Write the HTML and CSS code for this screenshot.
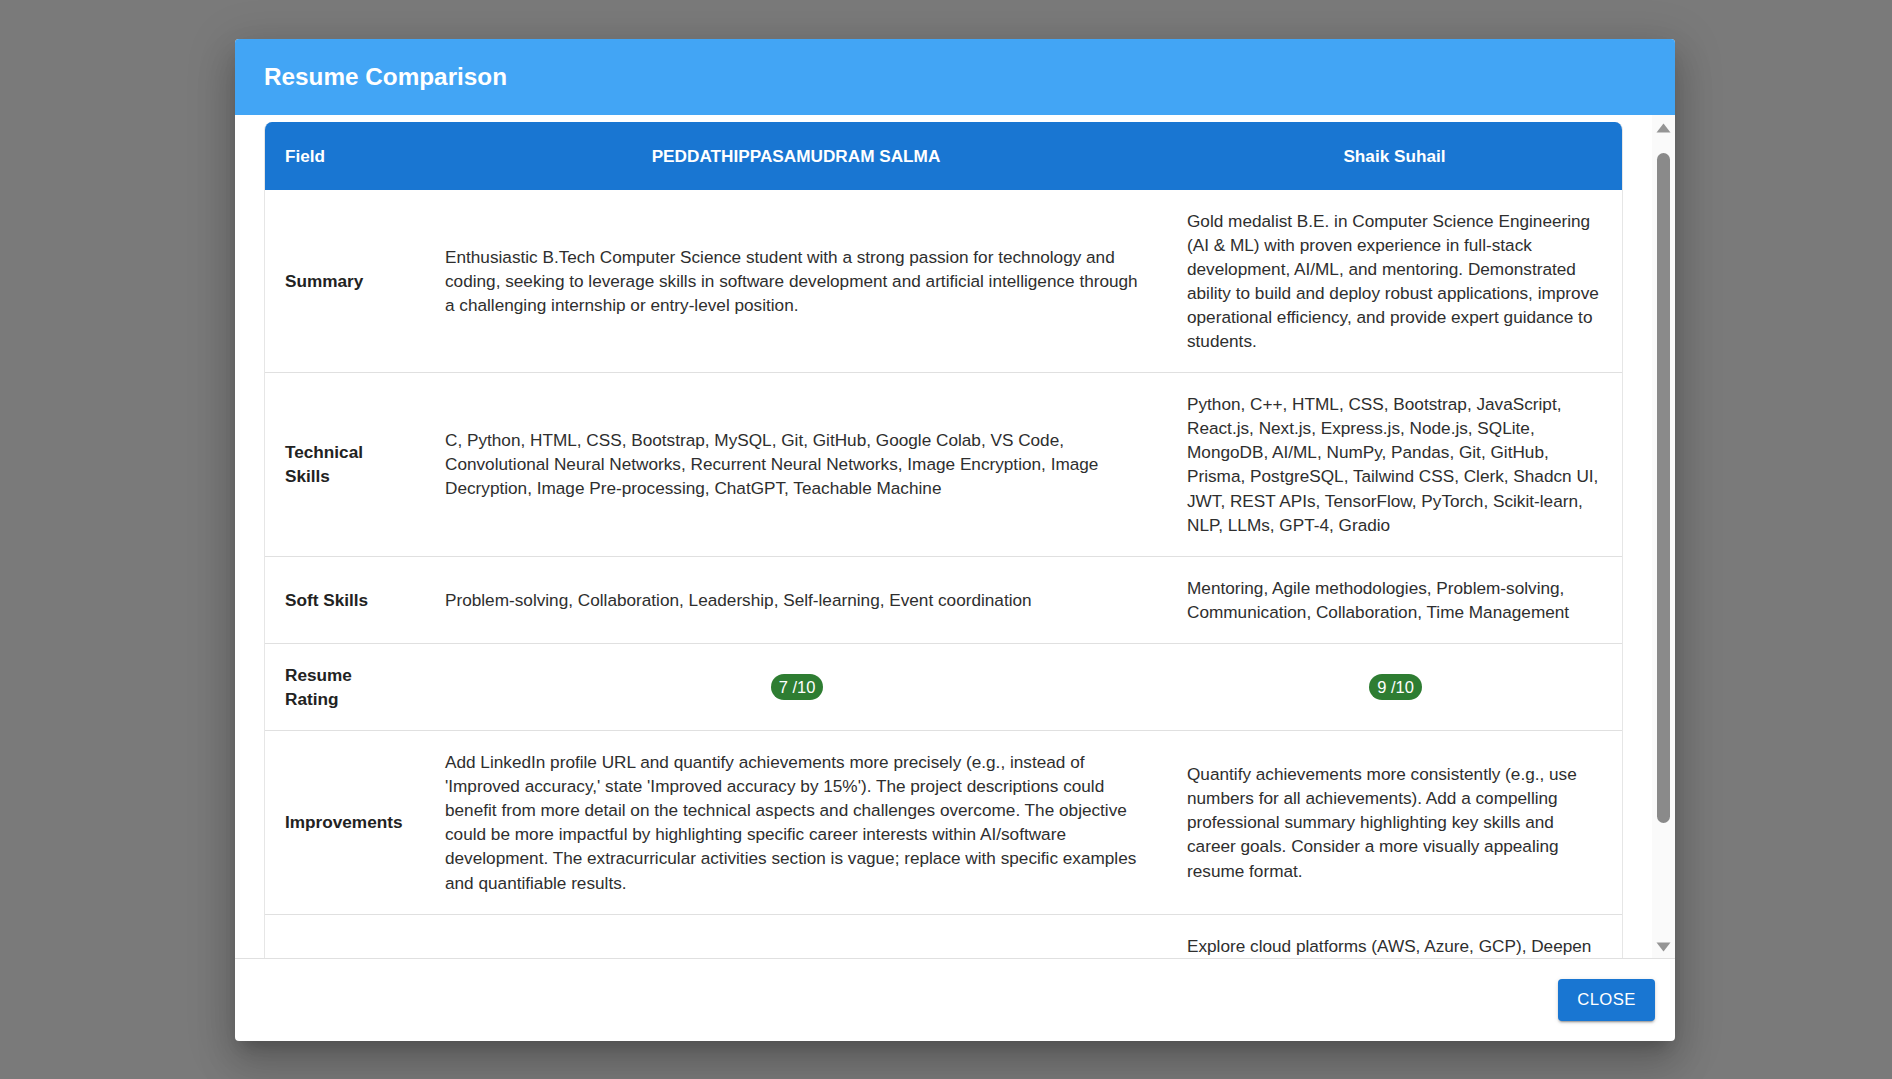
FILE: index.html
```html
<!DOCTYPE html>
<html lang="en">
<head>
<meta charset="utf-8">
<title>Resume Comparison</title>
<link rel="stylesheet" href="styles.css">
</head>
<body>
<div class="dialog">
  <div class="dialog-title">Resume Comparison</div>
  <div class="dialog-body">
    <div class="scroll-area">
      <div class="table-wrap">
        <table class="cmp">
          <colgroup>
            <col class="c-field">
            <col class="c-a">
            <col class="c-b">
          </colgroup>
          <thead>
            <tr>
              <th class="th-left">Field</th>
              <th>PEDDATHIPPASAMUDRAM SALMA</th>
              <th>Shaik Suhail</th>
            </tr>
          </thead>
          <tbody>
            <tr>
              <td class="field">Summary</td>
              <td>Enthusiastic B.Tech Computer Science student with a strong passion for technology and coding, seeking to leverage skills in software development and artificial intelligence through a challenging internship or entry-level position.</td>
              <td>Gold medalist B.E. in Computer Science Engineering (AI &amp; ML) with proven experience in full-stack development, AI/ML, and mentoring. Demonstrated ability to build and deploy robust applications, improve operational efficiency, and provide expert guidance to students.</td>
            </tr>
            <tr>
              <td class="field">Technical Skills</td>
              <td>C, Python, HTML, CSS, Bootstrap, MySQL, Git, GitHub, Google Colab, VS Code, Convolutional Neural Networks, Recurrent Neural Networks, Image Encryption, Image Decryption, Image Pre-processing, ChatGPT, Teachable Machine</td>
              <td>Python, C++, HTML, CSS, Bootstrap, JavaScript, React.js, Next.js, Express.js, Node.js, SQLite, MongoDB, AI/ML, NumPy, Pandas, Git, GitHub, Prisma, PostgreSQL, Tailwind CSS, Clerk, Shadcn UI, JWT, REST APIs, TensorFlow, PyTorch, Scikit-learn, NLP, LLMs, GPT-4, Gradio</td>
            </tr>
            <tr>
              <td class="field">Soft Skills</td>
              <td>Problem-solving, Collaboration, Leadership, Self-learning, Event coordination</td>
              <td>Mentoring, Agile methodologies, Problem-solving, Communication, Collaboration, Time Management</td>
            </tr>
            <tr>
              <td class="field">Resume Rating</td>
              <td class="center"><span class="chip">7 /10</span></td>
              <td class="center"><span class="chip">9 /10</span></td>
            </tr>
            <tr>
              <td class="field">Improvements</td>
              <td>Add LinkedIn profile URL and quantify achievements more precisely (e.g., instead of 'Improved accuracy,' state 'Improved accuracy by 15%'). The project descriptions could benefit from more detail on the technical aspects and challenges overcome. The objective could be more impactful by highlighting specific career interests within AI/software development. The extracurricular activities section is vague; replace with specific examples and quantifiable results.</td>
              <td>Quantify achievements more consistently (e.g., use numbers for all achievements). Add a compelling professional summary highlighting key skills and career goals. Consider a more visually appealing resume format.</td>
            </tr>
            <tr>
              <td class="field"></td>
              <td></td>
              <td>Explore cloud platforms (AWS, Azure, GCP), Deepen</td>
            </tr>
          </tbody>
        </table>
      </div>
    </div>
    <div class="scrollbar">
      <svg class="arrow" width="15" height="10" viewBox="0 0 15 10"><path d="M7.5 0.5 L14.5 9.5 L0.5 9.5 Z" fill="#959595"/></svg>
      <div class="track"><div class="thumb"></div></div>
      <svg class="arrow" width="15" height="10" viewBox="0 0 15 10"><path d="M0.5 0.5 L14.5 0.5 L7.5 9.5 Z" fill="#959595"/></svg>
    </div>
  </div>
  <div class="dialog-actions">
    <button class="btn">CLOSE</button>
  </div>
</div>
</body>
</html>
```

FILE: styles.css
```css
* { box-sizing: border-box; }

html, body {
  margin: 0;
  height: 100%;
}

body {
  background: #7a7a7a;
  font-family: "Liberation Sans", Arial, sans-serif;
  display: flex;
  align-items: center;
  padding-left: 235px;
  overflow: hidden;
}

.dialog {
  width: 1440px;
  height: 1002px;
  background: #fff;
  border-radius: 4px;
  overflow: hidden;
  display: flex;
  flex-direction: column;
  box-shadow: 0 11px 15px -7px rgba(0,0,0,0.2), 0 24px 38px 3px rgba(0,0,0,0.14), 0 9px 46px 8px rgba(0,0,0,0.12);
}

.dialog-title {
  height: 76px;
  flex: none;
  background: #42a5f5;
  color: #fff;
  font-weight: 700;
  font-size: 24.3px;
  display: flex;
  align-items: center;
  padding: 0 29px;
}

.dialog-body {
  flex: 1;
  display: flex;
  min-height: 0;
}

.scroll-area {
  flex: 1;
  overflow: hidden;
  padding: 7px 29px 0 29px;
}

.table-wrap {
  border: 1px solid #e6e6e6;
  border-top: none;
  border-radius: 8px 8px 0 0;
  overflow: hidden;
}

.cmp {
  width: 100%;
  border-collapse: collapse;
  table-layout: fixed;
  font-size: 17.2px;
  line-height: 24.1px;
  color: #2e2e2e;
}

.c-field { width: 160px; }
.c-a { width: 742px; }

.cmp th {
  background: #1976d2;
  color: #fff;
  font-weight: 700;
  text-align: center;
  padding: 22px 20px 22px;
}

.cmp th.th-left { text-align: left; }

.cmp td {
  padding: 19px 18px 19px 20px;
  border-bottom: 1px solid #e0e0e0;
  vertical-align: middle;
  text-align: left;
}

.cmp tbody tr:last-child td {
  vertical-align: top;
  height: 184px;
}

.cmp td.field {
  font-weight: 700;
  color: #222;
}

.cmp td.center { text-align: center; }

.chip {
  display: inline-flex;
  align-items: center;
  height: 26px;
  padding: 0 8px;
  border-radius: 13px;
  background: #2e7d32;
  color: #fff;
  font-size: 16.5px;
  line-height: 26px;
}

.scrollbar {
  width: 23px;
  flex: none;
  background: #fafafa;
  display: flex;
  flex-direction: column;
  align-items: center;
  padding: 8px 0 6px;
}

.arrow { flex: none; display: block; }

.track {
  flex: 1;
  width: 13px;
  padding: 20px 0 119px;
  display: flex;
}

.thumb {
  flex: 1;
  background: #8a8a8a;
  border-radius: 7px;
}

.dialog-actions {
  flex: none;
  height: 83px;
  border-top: 1px solid #e0e0e0;
  display: flex;
  justify-content: flex-end;
  align-items: center;
  padding: 0 20px;
}

.btn {
  font-family: "Liberation Sans", Arial, sans-serif;
  font-size: 16.7px;
  letter-spacing: 0.4px;
  line-height: 26px;
  height: 42px;
  width: 97px;
  padding: 8px 0;
  border: none;
  border-radius: 4px;
  background: #1976d2;
  color: #fff;
  box-shadow: 0 3px 1px -2px rgba(0,0,0,0.2), 0 2px 2px 0 rgba(0,0,0,0.14), 0 1px 5px 0 rgba(0,0,0,0.12);
}
```
